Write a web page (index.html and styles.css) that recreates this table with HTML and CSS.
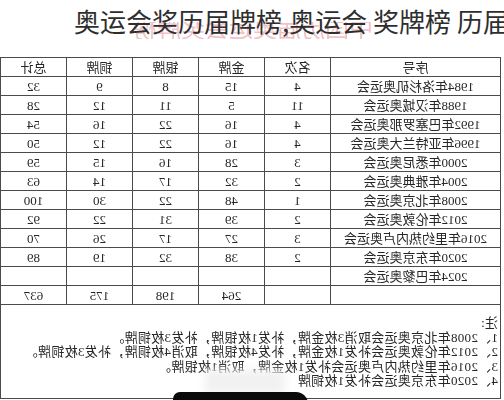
FILE: index.html
```html
<!DOCTYPE html>
<html lang="zh">
<head>
<meta charset="utf-8">
<link rel="stylesheet" href="styles.css">
</head>
<body>
<div class="page">
  <header class="head">
    <div class="wm-clip"><div class="wm">中国历届奥运会奖牌榜</div></div>
    <h1 class="title">奥运会奖历届牌榜,奥运会 奖牌榜 历届</h1>
  </header>
  <section class="sheet">
    <div class="grid">
      <div class="c h">序号</div><div class="c h">名次</div><div class="c h">金牌</div><div class="c h">银牌</div><div class="c h">铜牌</div><div class="c h">总计</div>
      <div class="c">1984年洛杉矶奥运会</div><div class="c">4</div><div class="c">15</div><div class="c">8</div><div class="c">9</div><div class="c">32</div>
      <div class="c">1988年汉城奥运会</div><div class="c">11</div><div class="c">5</div><div class="c">11</div><div class="c">12</div><div class="c">28</div>
      <div class="c">1992年巴塞罗那奥运会</div><div class="c">4</div><div class="c">16</div><div class="c">22</div><div class="c">16</div><div class="c">54</div>
      <div class="c">1996年亚特兰大奥运会</div><div class="c">4</div><div class="c">16</div><div class="c">22</div><div class="c">12</div><div class="c">50</div>
      <div class="c">2000年悉尼奥运会</div><div class="c">3</div><div class="c">28</div><div class="c">16</div><div class="c">15</div><div class="c">59</div>
      <div class="c">2004年雅典奥运会</div><div class="c">2</div><div class="c">32</div><div class="c">17</div><div class="c">14</div><div class="c">63</div>
      <div class="c">2008年北京奥运会</div><div class="c">1</div><div class="c">48</div><div class="c">22</div><div class="c">30</div><div class="c">100</div>
      <div class="c">2012年伦敦奥运会</div><div class="c">2</div><div class="c">39</div><div class="c">31</div><div class="c">22</div><div class="c">92</div>
      <div class="c">2016年里约热内卢奥运会</div><div class="c">3</div><div class="c">27</div><div class="c">17</div><div class="c">26</div><div class="c">70</div>
      <div class="c">2020年东京奥运会</div><div class="c">2</div><div class="c">38</div><div class="c">32</div><div class="c">19</div><div class="c">89</div>
      <div class="c">2024年巴黎奥运会</div><div class="c"></div><div class="c"></div><div class="c"></div><div class="c"></div><div class="c"></div>
      <div class="c"></div><div class="c"></div><div class="c">264</div><div class="c">198</div><div class="c">175</div><div class="c">637</div>
    </div>
    <div class="notes">
      <p>注:</p>
      <p>1、2008年北京奥运会取消3枚金牌，补发1枚银牌，补发3枚铜牌。</p>
      <p>2、2012年伦敦奥运会补发1枚金牌，补发4枚银牌，取消4枚铜牌，补发3枚铜牌。</p>
      <p>3、2016年里约热内卢奥运会补发1枚金牌，取消1枚银牌。</p>
      <p>4、2020年东京奥运会补发1枚铜牌</p>
    </div>
  </section>
  <div class="glare"></div>
  <div class="blob"></div>
</div>
</body>
</html>
```
FILE: styles.css
```css
* { box-sizing: border-box; }
html, body { margin: 0; padding: 0; background: #fff; }
.page {
  position: relative;
  width: 504px;
  height: 400px;
  overflow: hidden;
  display: flex;
  flex-direction: column;
}
.head {
  position: relative;
  height: 57px;
  flex: none;
}
.wm-clip {
  position: absolute;
  left: 128px;
  top: 22px;
  width: 245px;
  height: 17px;
  overflow: hidden;
}
.wm {
  margin-top: -7px;
  font-family: "Noto Sans CJK SC", sans-serif;
  font-size: 24px;
  line-height: 24px;
  color: #f0c2c8;
  transform: scaleX(-1);
  white-space: nowrap;
}
.title {
  position: relative;
  margin: 0;
  padding: 3px 0 0 74px;
  font-family: "Noto Sans CJK SC", sans-serif;
  font-weight: 400;
  font-size: 26px;
  line-height: 36px;
  color: #2e2e2e;
  white-space: nowrap;
}
.sheet {
  width: 501px;
  transform: scaleX(-1);
  font-family: "Liberation Serif", "Noto Sans CJK SC", serif;
  font-size: 13px;
  color: #262626;
}
.grid {
  display: grid;
  grid-template-columns: 170px repeat(5, 66px);
  grid-auto-rows: 19px;
  border-left: 1px solid #4a4a4a;
  border-top: 1px solid #4a4a4a;
}
.c {
  border-right: 1px solid #4a4a4a;
  border-bottom: 1px solid #4a4a4a;
  display: flex;
  align-items: center;
  justify-content: center;
  white-space: nowrap;
  line-height: 1;
}
.notes {
  height: 94px;
  border-left: 1px solid #4a4a4a;
  border-right: 1px solid #4a4a4a;
  border-bottom: 1px solid #4a4a4a;
  padding: 11px 0 0 2px;
  letter-spacing: 0.3px;
}
.notes p {
  margin: 0;
  line-height: 14.5px;
  white-space: nowrap;
}
.glare {
  position: absolute;
  left: 205px;
  top: 370px;
  width: 80px;
  height: 24px;
  background: #f1f1f1;
  filter: blur(4px);
}
.blob {
  position: absolute;
  left: 173px;
  top: 392px;
  width: 135px;
  height: 20px;
  background: #0a0a0a;
  border-radius: 7px 12px 0 0;
}
```
